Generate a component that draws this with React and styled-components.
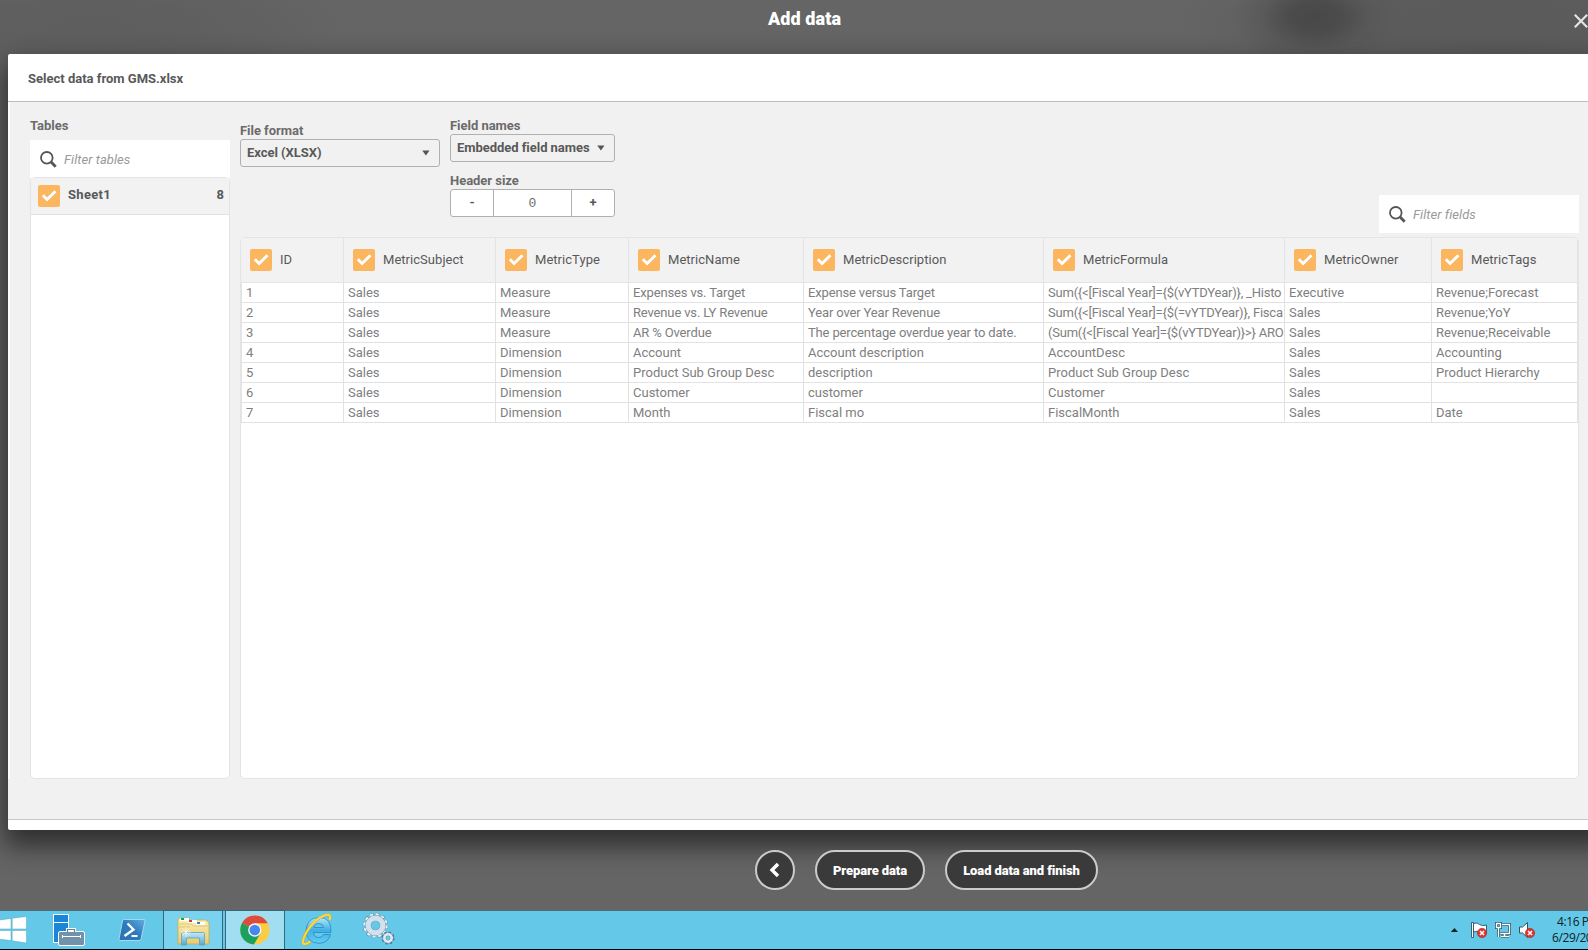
import React from "react";
import styled, { createGlobalStyle, css } from "styled-components";

const Global = createGlobalStyle`
  * { box-sizing: border-box; }
  html, body { margin: 0; padding: 0; overflow: hidden; }
  body { font-family: Roboto, "Liberation Sans", sans-serif; font-size: 13px; color: #595959; }
  button, input { font: inherit; }
`;

const Screen = styled.div`
  width: 1588px;
  height: 950px;
  overflow: hidden;
  display: flex;
  flex-direction: column;
  background:
    radial-gradient(ellipse 84px 50px at 1315px 17px, #484848 0%, #4b4b4b 28%, rgba(84, 84, 84, 0.5) 65%, transparent 100%),
    radial-gradient(ellipse 330px 60px at 1500px 20px, #5b5b5b 0%, #5c5c5c 45%, transparent 100%),
    radial-gradient(ellipse 260px 54px at 90px 24px, #5e5e5e 0%, #5f5f5f 40%, transparent 100%),
    #656565;
`;

const TitleBar = styled.header`
  height: 54px;
  flex: none;
  display: grid;
  grid-template-columns: 1fr auto 1fr;
  padding-left: 21px;
`;

const Title = styled.h1`
  margin: 0;
  font-size: 18px;
  line-height: 38px;
  font-weight: 900;
  color: #fff;
  letter-spacing: 0.1px;
`;

const CloseButton = styled.button`
  justify-self: end;
  width: 14px;
  height: 14px;
  margin-top: 14px;
  padding: 0;
  border: 0;
  background: none;
  svg { display: block; }
`;

const Dialog = styled.main`
  flex: none;
  width: 1600px;
  height: 776px;
  margin-left: 8px;
  display: flex;
  flex-direction: column;
  background: #fff;
  border-radius: 2px;
  overflow: hidden;
  box-shadow: 0 12px 26px 4px rgba(20, 20, 20, 0.68);
`;

const DialogHeader = styled.h2`
  margin: 0;
  flex: none;
  height: 48px;
  padding-left: 20px;
  border-bottom: 1px solid #bdbdbd;
  font-size: 13px;
  line-height: 49px;
  font-weight: 700;
`;

const DialogBody = styled.div`
  flex: none;
  height: 677px;
  margin-left: 2px;
  padding: 13px 0 0 20px;
  display: flex;
  gap: 10px;
  background: #f1f1f1;
`;

const DialogFoot = styled.div`
  height: 41px;
  flex: none;
  background: #f1f1f1;
  border-bottom: 1px solid #c8c8c8;
`;

const Sidebar = styled.section`
  width: 200px;
  display: flex;
  flex-direction: column;
`;

const Label = styled.div`
  height: ${(p) => p.$height || 19}px;
  line-height: 21px;
  font-weight: 700;
  color: #6b6b6b;
  white-space: nowrap;
  letter-spacing: -0.03px;
`;

const SearchBox = styled.label`
  flex: none;
  width: 200px;
  height: 38px;
  padding-left: 10px;
  display: flex;
  align-items: center;
  gap: 7px;
  background: #fff;
  color: #9a9a9a;
  font-style: italic;
`;

const SearchText = styled.span`
  padding-top: 1px;
  letter-spacing: 0.05px;
`;

const TableList = styled.div`
  flex: 1;
  margin-top: -1px;
  background: #fff;
  border: 1px solid #e4e4e4;
  border-radius: 5px;
  overflow: hidden;
`;

const TableItem = styled.div`
  height: 37px;
  padding: 0 5px 0 7px;
  display: flex;
  align-items: center;
  gap: 8px;
  background: #f2f2f2;
  border-bottom: 1px solid #e0e0e0;
  font-weight: 700;
`;

const ItemName = styled.span`
  flex: 1;
  margin-top: -3px;
  letter-spacing: 0.3px;
`;

const ItemCount = styled.span`
  margin-top: -3px;
`;

const CheckBox = styled.span`
  width: 22px;
  height: 22px;
  flex: none;
  border-radius: 2px;
  background: #fbb65f;
  svg { display: block; }
`;

const Content = styled.section`
  width: 1339px;
  display: flex;
  flex-direction: column;
`;

const Controls = styled.div`
  height: 122px;
  flex: none;
  display: flex;
  gap: 10px;
`;

const Field = styled.div`
  width: ${(p) => (p.$width ? `${p.$width}px` : "auto")};
  padding-top: ${(p) => p.$top || 0}px;
`;

const FilterSlot = styled.div`
  margin-left: auto;
  align-self: flex-end;
  padding-bottom: 4px;
`;

const controlBox = css`
  height: 28px;
  border: 1px solid #b0b0b0;
  border-radius: 3px;
`;

const Select = styled.button`
  ${controlBox}
  width: 100%;
  padding: 0 9px 2px 6px;
  display: flex;
  align-items: center;
  justify-content: space-between;
  background: #f1f1f1;
  color: #595959;
  font-weight: 700;
  white-space: nowrap;
  letter-spacing: -0.04px;
  svg { margin-top: 2px; }
`;

const Stepper = styled.div`
  ${controlBox}
  display: grid;
  grid-template-columns: 42px 1fr 42px;
  background: #fff;
  overflow: hidden;
  text-align: center;
  line-height: 26px;
  font-weight: 700;
`;

const StepperValue = styled.span`
  border: solid #b0b0b0;
  border-width: 0 1px;
  font: 13px/28px "Liberation Mono", monospace;
  color: #6b6b6b;
`;

const GridPanel = styled.div`
  flex: 1;
  background: #fff;
  border: 1px solid #e4e4e4;
  border-radius: 5px;
  overflow: hidden;
`;

const DataTable = styled.table`
  table-layout: fixed;
  width: 1337px;
  border-collapse: separate;
  border-spacing: 0;
`;

const HeadCell = styled.th`
  height: 45px;
  padding: 0 0 1px 9px;
  background: #f2f2f2;
  border-right: 1px solid #e4e4e4;
  border-bottom: 1px solid #e4e4e4;
  font-weight: 400;
  text-align: left;
`;

const HeadContent = styled.div`
  display: flex;
  align-items: center;
  gap: 8px;
  letter-spacing: 0.04px;
`;

const Cell = styled.td`
  height: 20px;
  padding: 0 0 0 4px;
  border-right: 1px solid #e2e2e2;
  border-bottom: 1px solid #e2e2e2;
  color: #808080;
  line-height: 19px;
  white-space: nowrap;
  overflow: hidden;
  letter-spacing: ${(p) => p.$spacing}px;
  &:first-child { padding-left: 5px; box-shadow: inset 1px 0 #e4e4e4; }
`;

const Actions = styled.footer`
  flex: 1;
  padding: 20px 0 0 755px;
  display: flex;
  gap: 20px;
  align-items: flex-start;
`;

const RoundButton = styled.button`
  width: ${(p) => p.$width}px;
  height: 40px;
  padding: 0;
  display: flex;
  align-items: center;
  justify-content: center;
  border: 2px solid #cbcbcb;
  border-radius: 20px;
  background: #3a3a3a;
  color: #fff;
  font-weight: 900;
  white-space: nowrap;
  position: relative;
  letter-spacing: -0.1px;
`;

const Taskbar = styled.nav`
  flex: none;
  height: 40px;
  display: flex;
  background: #64c9e9;
  border-top: 1px solid #4d6f7b;
  border-bottom: 1px solid #0a0a0a;
`;

const TaskSlot = styled.div`
  flex: none;
  width: ${(p) => p.$width}px;
  margin-left: ${(p) => p.$gap || 0}px;
  ${(p) => p.$open && css`
    margin-top: -1px;
    border: solid #35667a;
    border-width: 1px 1px 0;
    background: ${p.$open === "active" ? "#a1def2" : "#7bd2ee"};
  `}
  svg { display: block; }
`;

const Tray = styled.div`
  margin-left: auto;
  display: flex;
  width: 138px;
`;

const Clock = styled.div`
  width: 37px;
  flex: none;
  overflow: hidden;
  padding-top: 3px;
  font: 12px/16px "Open Sans", "Noto Sans", sans-serif;
  letter-spacing: -0.4px;
  color: #0d1d24;
  white-space: nowrap;
`;

const ClockTime = styled.div`
  padding-left: 6px;
`;

const ClockDate = styled.div`
  padding-left: 1px;
`;

const Magnifier = () => (
  <svg width="17" height="17" viewBox="0 0 17 17" fill="none" stroke="#555">
    <circle cx="6.8" cy="6.8" r="5.8" strokeWidth="1.8" />
    <path d="M11.1 11.1l4.6 4.6" strokeWidth="2.8" />
  </svg>
);

const Caret = () => (
  <svg width="8" height="6" viewBox="0 0 8 6"><path d="M0.3 0.4h7.2L3.9 5.4z" fill="#555" /></svg>
);

const Tick = () => (
  <CheckBox>
    <svg width="22" height="22" viewBox="0 0 22 22">
      <path d="M4.800 10.200l4.300 4.300L17.500 6.300" fill="none" stroke="#fff" strokeWidth="3" />
    </svg>
  </CheckBox>
);

const WindowsIcon = () => (
  <svg width="28" height="38" viewBox="0 0 28 38">
    <g fill="#fff" stroke="#4fa9c5" strokeWidth=".5">
      <path d="M-2 9.200L11 7.400V18H-2zM12.200 7.200L26.500 5.500V18H12.200zM-2 19.400H11V29.600L-2 28zM12.200 19.400H26.500V32L12.200 29.800z" />
    </g>
  </svg>
);

const ServerIcon = () => (
  <svg width="34" height="38" viewBox="0 0 34 38">
    <path d="M1.500 3.500h15v28h-15z" fill="#1a86d8" stroke="#fff" />
    <path d="M1.500 11.500h15" stroke="#fff" />
    <path d="M15.500 21v-2.500h7V21" fill="none" stroke="#fff" strokeWidth="3" />
    <rect x="6.500" y="20.500" width="26" height="14" rx="1.500" fill="#7192a9" stroke="#fff" />
    <path d="M15.500 21v-2.500h7V21" fill="none" stroke="#60859d" strokeWidth="1.200" />
    <path d="M10 25.500h19M10.500 24v3M28.500 24v3" stroke="#fff" />
  </svg>
);

const PowerShellIcon = () => (
  <svg width="30" height="38" viewBox="0 0 30 38">
    <defs>
      <linearGradient id="ps" x1="0" y1="1" x2="1" y2="0">
        <stop offset="0" stopColor="#2a74b4" /><stop offset=".5" stopColor="#2c79bd" /><stop offset="1" stopColor="#64afdf" />
      </linearGradient>
    </defs>
    <path d="M6.500 8.500h20.500q1.500 0 1 1.500l-4 18q-.5 1.500-2 1.500H3q-1.500 0-1-1.500L5.500 10q.2-1.500 1-1.500z" fill="url(#ps)" stroke="#a7d5ed" />
    <path d="M10.500 12.500l6 6-9 6.500" fill="none" stroke="#fff" strokeWidth="2.400" />
    <path d="M14.500 25h6" stroke="#fff" strokeWidth="2" />
  </svg>
);

const ExplorerIcon = () => (
  <svg width="58" height="38" viewBox="0 0 58 38">
    <defs>
      <linearGradient id="folder" x1="0" y1="0" x2="0" y2="1">
        <stop offset="0" stopColor="#fbf0b5" /><stop offset="1" stopColor="#e9cc70" />
      </linearGradient>
      <linearGradient id="stand" x1="0" y1="0" x2="0" y2="1">
        <stop offset="0" stopColor="#c6e8f5" /><stop offset="1" stopColor="#54a9d2" />
      </linearGradient>
    </defs>
    <path d="M14 33V9q0-2 2-2h9l1 3h5l2-1h9l3 3v21z" fill="url(#folder)" stroke="#c9a94e" strokeWidth=".8" />
    <path d="M16 7h9v3h-9zM24 9h9v3h-9zM32 11h9v3h-9z" fill="#fff" />
    <path d="M17 7h3v2h-3z" fill="#1aa833" />
    <path d="M25 9h3v2h-3z" fill="#d63b24" />
    <path d="M33 11h3v2h-3z" fill="#2684ca" />
    <path d="M15 13h12l2 2h15M15 16h11" fill="none" stroke="#d9bc66" strokeWidth=".7" />
    <path d="M17.500 34V22.500q0-1 1-1h21q1 0 1 1V34h-5v-7h-13v7z" fill="url(#stand)" stroke="#5aa3c3" strokeWidth=".8" />
    <path d="M22 16v10M17 21h10M18.500 17.500l7 7M25.500 17.500l-7 7" stroke="#fff" strokeWidth=".7" />
  </svg>
);

const ChromeIcon = () => (
  <svg width="58" height="38" viewBox="0 0 58 38">
    <circle cx="28.800" cy="19" r="14.600" fill="#fccd42" />
    <path d="M28.800 19L16.160 11.700A14.600 14.600 0 0 1 41.800 12.300H28.800z" fill="#dc4b3e" />
    <path d="M28.800 19L16.160 11.700A14.600 14.600 0 0 0 27.800 33.600L34.600 22.300z" fill="#1ba05f" />
    <circle cx="28.800" cy="19" r="6.700" fill="#f3f7f8" />
    <circle cx="28.800" cy="19" r="5.300" fill="#4688ed" />
  </svg>
);

const ExplorerEIcon = () => (
  <svg width="32" height="38" viewBox="0 0 32 38">
    <defs>
      <linearGradient id="ie" x1="0" y1="0" x2="0" y2="1">
        <stop offset="0" stopColor="#b5e8fa" /><stop offset=".5" stopColor="#3fb0e6" /><stop offset="1" stopColor="#62cdf1" />
      </linearGradient>
    </defs>
    <path d="M29.500 23.500H22.500q-1.500 3-4.700 3-5 0-5.300-5H30Q31 6.500 18 6.500 5.500 7 5 19.500 5.500 32 18 32.300q9 0 11.500-8.800zM12.700 16.500q1-4 5-4t5 4z" fill="url(#ie)" stroke="#2480b8" strokeWidth=".7" />
    <path d="M28.500 9Q31 2.500 24.500 4 13 8 5 22-1 34 4.500 33q2-.4 5-2.700" fill="none" stroke="#c9a53a" strokeWidth="2.800" />
    <path d="M28.500 9Q31 2.500 24.500 4 13 8 5 22-1 34 4.500 33q2-.4 5-2.700" fill="none" stroke="#fbd93c" strokeWidth="2" />
  </svg>
);

const GearsIcon = () => (
  <svg width="36" height="38" viewBox="0 0 36 38">
    <circle cx="13.500" cy="14.500" r="11" fill="none" stroke="#6888a1" strokeWidth="3.500" strokeDasharray="3.400 2.360" />
    <circle cx="13.500" cy="14.500" r="11" fill="none" stroke="#eef4f8" strokeWidth="2.400" strokeDasharray="2.900 2.860" />
    <circle cx="13.500" cy="14.500" r="7.400" fill="none" stroke="#7795ad" strokeWidth="6" />
    <circle cx="13.500" cy="14.500" r="7.400" fill="none" stroke="#d3e1ec" strokeWidth="5.200" />
    <circle cx="26" cy="27" r="5.300" fill="none" stroke="#55758d" strokeWidth="2.600" strokeDasharray="2.200 1.960" />
    <circle cx="26" cy="27" r="3.700" fill="none" stroke="#6e8fa9" strokeWidth="3.400" />
    <circle cx="26" cy="27" r="3.700" fill="none" stroke="#e1ebf2" strokeWidth="2.500" />
  </svg>
);

const Badge = ({ x, y }) => (
  <g>
    <circle cx={x} cy={y} r="4.700" fill="#d93630" stroke="#a9231d" strokeWidth=".5" />
    <path d={`M${x - 2} ${y - 2}l4 4m0-4l-4 4`} stroke="#fff" strokeWidth="1.500" />
  </g>
);

const TrayIcons = () => (
  <svg width="101" height="38" viewBox="0 0 101 38">
    <path d="M0.800 21L4.500 17l3.500 4z" fill="#10242c" />
    <g fill="#fff" stroke="#28566a" strokeWidth=".9">
      <path d="M21.500 11.500h2v15h-2z" />
      <path d="M23.500 12.500q4-1.500 6 1 3 2 7 .5v8q-5 1-7-1-2-1.500-6 0z" />
    </g>
    <Badge x={32} y={22} />
    <g fill="none" stroke="#28566a" strokeWidth="3">
      <path d="M52 13.500h7.500v9h-9M46.500 12.500h4v4h-4zM48.500 17v9M54.500 23v3M51 25.500h8" />
    </g>
    <g fill="none" stroke="#fff" strokeWidth="1.400">
      <path d="M52 13.500h7.500v9h-9M46.500 12.500h4v4h-4zM48.500 17v9M54.500 23v3M51 25.500h8" />
    </g>
    <path d="M69.500 16h3l5-4.500v15l-5-4.500h-3z" fill="#fff" stroke="#28566a" />
    <Badge x={80} y={22} />
  </svg>
);

const columns = [
  ["ID", 103], ["MetricSubject", 152], ["MetricType", 133], ["MetricName", 175],
  ["MetricDescription", 240], ["MetricFormula", 241], ["MetricOwner", 147], ["MetricTags", 146],
];

const rows = [
  ["1", "Sales", "Measure", "Expenses vs. Target", "Expense versus Target", "Sum({<[Fiscal Year]={$(vYTDYear)}, _Histo", "Executive", "Revenue;Forecast"],
  ["2", "Sales", "Measure", "Revenue vs. LY Revenue", "Year over Year Revenue", "Sum({<[Fiscal Year]={$(=vYTDYear)}, Fisca", "Sales", "Revenue;YoY"],
  ["3", "Sales", "Measure", "AR % Overdue", "The percentage overdue year to date.", "(Sum({<[Fiscal Year]={$(vYTDYear)}>} ARO", "Sales", "Revenue;Receivable"],
  ["4", "Sales", "Dimension", "Account", "Account description", "AccountDesc", "Sales", "Accounting"],
  ["5", "Sales", "Dimension", "Product Sub Group Desc", "description", "Product Sub Group Desc", "Sales", "Product Hierarchy"],
  ["6", "Sales", "Dimension", "Customer", "customer", "Customer", "Sales", ""],
  ["7", "Sales", "Dimension", "Month", "Fiscal mo", "FiscalMonth", "Sales", "Date"],
];

const cellSpacing = (row, column) => {
  if (row > 2 || column < 3 || column > 5) return 0;
  return column === 5 ? -0.22 : -0.15;
};

export default function App() {
  return (
    <Screen>
      <Global />
      <TitleBar>
        <span />
        <Title>Add data</Title>
        <CloseButton aria-label="Close">
          <svg width="14" height="14" viewBox="0 0 14 14"><path d="M0.800 0.800l12.400 12.400M13.200 0.800L0.800 13.200" stroke="#e4e4e4" strokeWidth="2.200" /></svg>
        </CloseButton>
      </TitleBar>
      <Dialog>
        <DialogHeader>Select data from GMS.xlsx</DialogHeader>
        <DialogBody>
          <Sidebar>
            <Label $height={25}>Tables</Label>
            <SearchBox><Magnifier /><SearchText>Filter tables</SearchText></SearchBox>
            <TableList>
              <TableItem><Tick /><ItemName>Sheet1</ItemName><ItemCount>8</ItemCount></TableItem>
            </TableList>
          </Sidebar>
          <Content>
            <Controls>
              <Field $width={200} $top={5}>
                <Label>File format</Label>
                <Select>Excel (XLSX)<Caret /></Select>
              </Field>
              <Field $width={165}>
                <Label>Field names</Label>
                <Select>Embedded field names<Caret /></Select>
                <Field $top={8}>
                  <Label>Header size</Label>
                  <Stepper><span>-</span><StepperValue>0</StepperValue><span>+</span></Stepper>
                </Field>
              </Field>
              <FilterSlot>
                <SearchBox><Magnifier /><SearchText>Filter fields</SearchText></SearchBox>
              </FilterSlot>
            </Controls>
            <GridPanel>
              <DataTable>
                <colgroup>{columns.map(([name, w]) => <col key={name} width={w} />)}</colgroup>
                <thead>
                  <tr>{columns.map(([name]) => (
                    <HeadCell key={name}><HeadContent><Tick />{name}</HeadContent></HeadCell>
                  ))}</tr>
                </thead>
                <tbody>
                  {rows.map((row, r) => (
                    <tr key={row[0]}>{row.map((value, c) => (
                      <Cell key={c} $spacing={cellSpacing(r, c)}>{value}</Cell>
                    ))}</tr>
                  ))}
                </tbody>
              </DataTable>
            </GridPanel>
          </Content>
        </DialogBody>
        <DialogFoot />
      </Dialog>
      <Actions>
        <RoundButton $width={40} aria-label="Back">
          <svg width="12" height="16" viewBox="0 0 12 16"><path d="M9 2L3 8l6 6" fill="none" stroke="#fff" strokeWidth="3.400" /></svg>
        </RoundButton>
        <RoundButton $width={110}>Prepare data</RoundButton>
        <RoundButton $width={153}>Load data and finish</RoundButton>
      </Actions>
      <Taskbar>
        <TaskSlot $width={28}><WindowsIcon /></TaskSlot>
        <TaskSlot $width={34} $gap={24}><ServerIcon /></TaskSlot>
        <TaskSlot $width={30} $gap={31}><PowerShellIcon /></TaskSlot>
        <TaskSlot $width={60} $gap={16} $open="idle"><ExplorerIcon /></TaskSlot>
        <TaskSlot $width={60} $gap={2} $open="active"><ChromeIcon /></TaskSlot>
        <TaskSlot $width={32} $gap={16}><ExplorerEIcon /></TaskSlot>
        <TaskSlot $width={36} $gap={29}><GearsIcon /></TaskSlot>
        <Tray>
          <TrayIcons />
          <Clock><ClockTime>4:16 P</ClockTime><ClockDate>6/29/20</ClockDate></Clock>
        </Tray>
      </Taskbar>
    </Screen>
  );
}
